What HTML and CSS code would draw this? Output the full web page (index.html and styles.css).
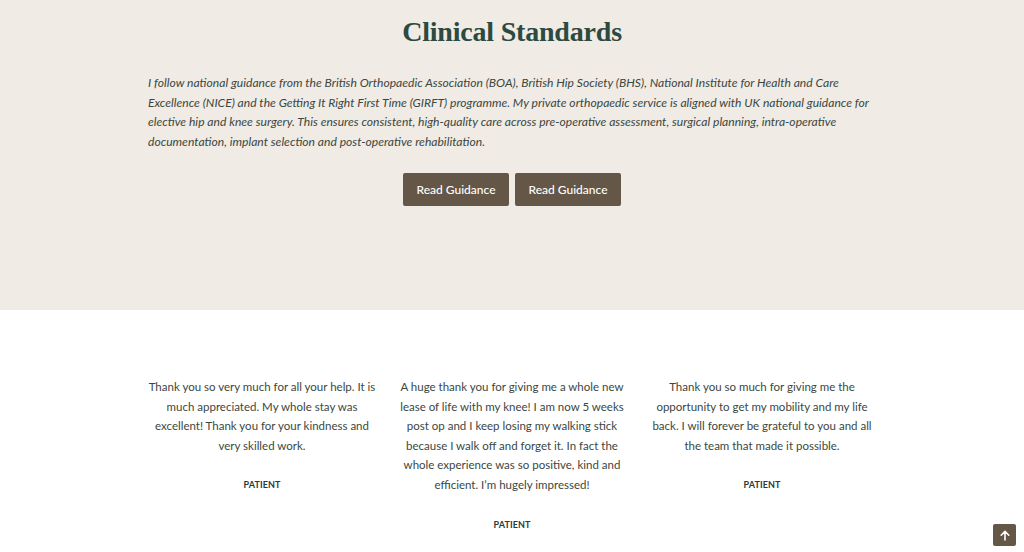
FILE: index.html
```html
<!DOCTYPE html>
<html>
<head>
<meta charset="utf-8">
<link rel="stylesheet" href="styles.css">
</head>
<body>
<section class="hero">
  <div class="container">
    <h1 class="title">Clinical Standards</h1>
    <p class="lead">I follow national guidance from the British Orthopaedic Association (BOA), British Hip Society (BHS), National Institute for Health and Care Excellence (NICE) and the Getting It Right First Time (GIRFT) programme. My private orthopaedic service is aligned with UK national guidance for elective hip and knee surgery. This ensures consistent, high-quality care across pre-operative assessment, surgical planning, intra-operative documentation, implant selection and post-operative rehabilitation.</p>
    <div class="actions">
      <a class="btn" href="#">Read Guidance</a>
      <a class="btn" href="#">Read Guidance</a>
    </div>
  </div>
</section>
<section class="testimonials">
  <div class="grid">
    <div class="card">
      <p class="quote">Thank you so very much for all your help. It is much appreciated. My whole stay was excellent! Thank you for your kindness and very skilled work.</p>
      <p class="author">PATIENT</p>
    </div>
    <div class="card">
      <p class="quote">A huge thank you for giving me a whole new lease of life with my knee! I am now 5 weeks post op and I keep losing my walking stick because I walk off and forget it. In fact the whole experience was so positive, kind and efficient. I’m hugely impressed!</p>
      <p class="author">PATIENT</p>
    </div>
    <div class="card">
      <p class="quote">Thank you so much for giving me the opportunity to get my mobility and my life back. I will forever be grateful to you and all the team that made it possible.</p>
      <p class="author">PATIENT</p>
    </div>
  </div>
</section>
<a class="to-top" href="#" aria-label="Scroll to top">
  <svg width="10" height="11" viewBox="0 0 10 11"><path d="M5 10V1.5M1.2 5.2L5 1.4l3.8 3.8" fill="none" stroke="#fff" stroke-width="1.6" stroke-linecap="round" stroke-linejoin="round"/></svg>
</a>
</body>
</html>
```

FILE: styles.css
```css
html, body {
  margin: 0;
  padding: 0;
}
body {
  font-family: Lato, "Open Sans", Arial, sans-serif;
  color: #3b4741;
  background: #ffffff;
  overflow: hidden;
  height: 552px;
}
.hero {
  background: #f0ebe5;
  height: 310px;
  box-sizing: border-box;
  padding-top: 13px;
}
.container {
  width: 728px;
  margin: 0 auto;
}
.title {
  margin: 0;
  text-align: center;
  font-family: "Liberation Serif", "DejaVu Serif", serif;
  font-weight: 700;
  font-size: 28px;
  line-height: 38px;
  color: #2c4a3f;
  letter-spacing: -0.2px;
}
.lead {
  margin: 22px 0 0;
  font-style: italic;
  font-size: 12.1px;
  line-height: 19.6px;
  color: #3b4741;
}
.actions {
  display: flex;
  justify-content: center;
  gap: 6px;
  margin-top: 22px;
}
.btn {
  display: flex;
  align-items: center;
  justify-content: center;
  width: 106px;
  height: 33px;
  background: #655747;
  color: #ffffff;
  border-radius: 2px;
  text-decoration: none;
  font-size: 12px;
  font-weight: 500;
}
.testimonials {
  padding-top: 67px;
}
.grid {
  width: 750px;
  margin: 0 auto;
  display: grid;
  grid-template-columns: repeat(3, 1fr);
}
.card {
  padding: 0 8px;
  text-align: center;
}
.quote {
  margin: 0;
  font-size: 11.5px;
  line-height: 19.6px;
  color: #3b4741;
}
.author {
  margin: 24px 0 0;
  font-size: 9px;
  font-weight: 700;
  line-height: 12px;
  color: #2c3a34;
  letter-spacing: 0.1px;
}
.to-top {
  position: fixed;
  right: 8px;
  bottom: 6px;
  width: 23px;
  height: 22px;
  background: #655747;
  border-radius: 2px;
  display: flex;
  align-items: center;
  justify-content: center;
}
```
